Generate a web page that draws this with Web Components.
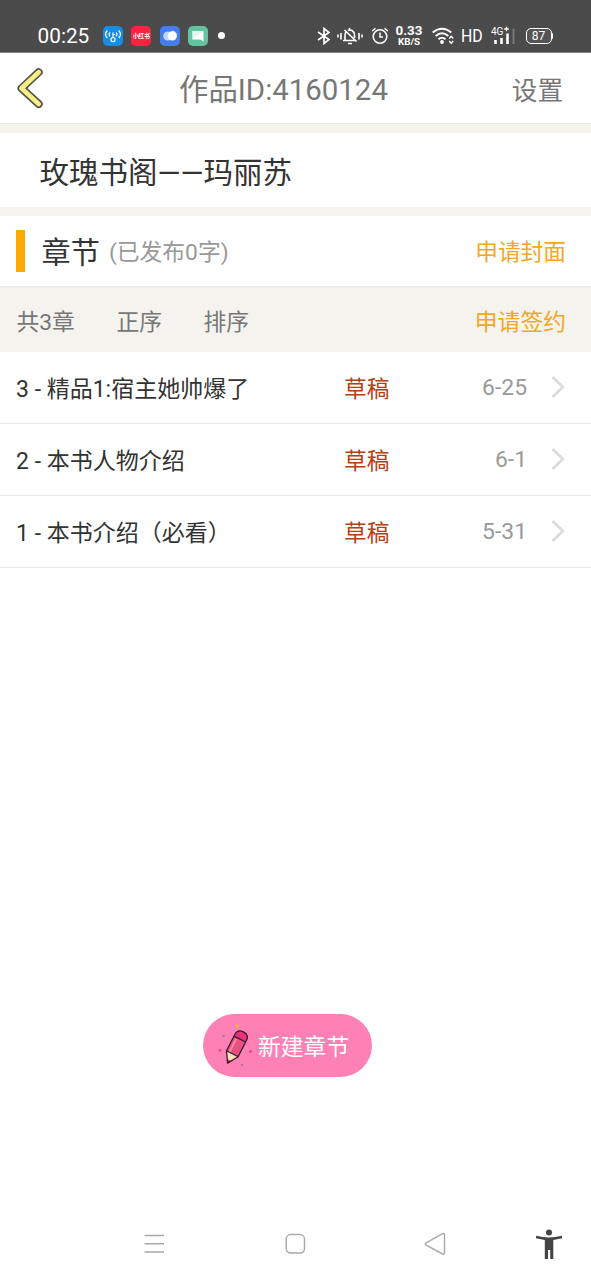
<!DOCTYPE html>
<html lang="zh-CN">
<head>
<meta charset="utf-8">
<title>作品</title>
<style>
html,body{margin:0;height:100%;background:#fff;overflow:hidden}
body{font-family:Roboto,"Noto Sans CJK SC",sans-serif;color:#333}
</style>
</head>
<body>
<work-page></work-page>
<script>
const define=(name,html)=>customElements.define(name,class extends HTMLElement{
  constructor(){super();this.attachShadow({mode:'open'}).innerHTML=html}
});

define('status-bar',`<style>
:host{display:flex;box-sizing:border-box;height:52.5px;padding:20px 38px 0 37.5px;background:#4b4b4b;border-bottom:1px solid #858585;color:#fff;align-items:center;justify-content:space-between}
.g{display:flex;align-items:center;height:32px}
.time{font-size:20.8px;line-height:32px;width:65px}
svg{display:block;flex:none}
.apps{display:flex;gap:8.6px;align-items:center}
.red{width:20px;height:20px;border-radius:5px;background:#fb233f;font-size:6px;line-height:20px;text-align:center;font-weight:700;letter-spacing:-.4px;white-space:nowrap}
.dot{width:7px;height:7px;border-radius:50%;background:#fff;margin-left:9.5px}
.rate{font-size:13.4px;font-weight:700;line-height:13px;text-align:center;width:27px;margin:-1px 9px 0 7px}
.rate small{display:block;font-size:9.8px;line-height:9px;margin-top:-1px;padding-top:1px}
.hd{font-size:18px;line-height:32px;width:22px;margin:0 8px 0 7px;transform:scaleX(.88);transform-origin:0 0}
.bat{display:flex;align-items:center;margin-left:11px}
.b{box-sizing:border-box;width:26px;height:16px;border:1.6px solid #fff;border-radius:5px;font-size:12px;line-height:14px;text-align:center;background:#555}
.n{width:1.5px;height:6px;background:#fff;border-radius:0 1px 1px 0}
</style>
<div class="g"><span class="time">00:25</span>
<div class="apps">
<svg width="20" height="20" viewBox="0 0 20 20"><rect width="20" height="20" rx="5" fill="#168ee5"/><g fill="none" stroke="#fff" stroke-width="1.2"><path d="M4.300 4.500Q.8 8.300 4.300 12M7 6.300Q5 8.300 7 10.300M15.700 4.500Q19.200 8.300 15.700 12M13 6.300Q15 8.300 13 10.300M10 11.500V6.500M10 8.500H12"/><circle cx="10" cy="13.600" r="2.100"/></g></svg>
<div class="red">小红书</div>
<svg width="20" height="20" viewBox="0 0 20 20"><rect width="20" height="20" rx="5" fill="#477ee4"/><circle cx="7.800" cy="10" r="4.600" fill="#bed7fc"/><circle cx="12.300" cy="9.900" r="4.600" fill="#fff"/><path d="M11 5.500a4.500 4.500 0 0 1 5.500 3" fill="none" stroke="#f6e8a8"/></svg>
<svg width="20" height="20" viewBox="0 0 20 20"><rect width="20" height="20" rx="5" fill="#62c4a0"/><path d="M4.500 5H15.500V15.500L12.500 13.500H4.500Z" fill="#fff"/><path d="M4.500 13L15 5.500V5H4.500Z" fill="#e0f5ec"/></svg>
</div><span class="dot"></span></div>
<div class="g">
<svg width="16" height="20" viewBox="0 0 16 20"><path d="M2 6L13 13.500L8 17.500V2.500L13 6.500L2 14" fill="none" stroke="#fff" stroke-width="1.700"/></svg>
<svg width="26" height="20" viewBox="0 0 26 20" style="margin-left:5.500px"><path d="M1 8.500V11.500M4 7V13.500M22 7V13.500M25 8.500V11.500M7.500 4L19.500 15.500M6 14.500H18M8 14V9.500Q8 7 9 6M11 4.500Q13 3.500 15 4.500Q17.500 6 17.500 9V12M12.500 2V4M11 17.500H15" fill="none" stroke="#fff" stroke-width="1.600"/></svg>
<svg width="18" height="20" viewBox="0 0 18 20" style="margin-left:7.500px"><circle cx="9" cy="10.500" r="6.800" fill="none" stroke="#fff" stroke-width="1.600"/><path d="M9 6.500V11H12M1.200 5L4.500 2.200M13.500 2.200L16.800 5" fill="none" stroke="#fff" stroke-width="1.500"/></svg>
<div class="rate">0.33<small>KB/S</small></div>
<svg width="22" height="20" viewBox="0 0 22 20"><g fill="none" stroke="#fff" stroke-width="2"><path d="M.7 6.500Q10 -1 19.300 6.500M3.700 10Q10 4.500 16.300 10M6.500 13.200Q10 10.200 13.500 13.200"/></g><circle cx="10" cy="16" r="1.900" fill="#fff"/><path d="M17.200 12.500L19.200 10.300L21.200 12.500M17.200 15L19.200 17.200L21.200 15" fill="none" stroke="#fff" stroke-width="1.400"/></svg>
<span class="hd">HD</span>
<svg width="24" height="20" viewBox="0 0 24 20"><text x="0" y="8.800" font-family="Roboto" font-size="10" fill="#fff">4G</text><path d="M13.200 3H17.800M15.500 .7V5.300" stroke="#fff" stroke-width="1.300"/><path d="M4.500 14V18M10.500 12V18M16.500 7.500V18" stroke="#fff" stroke-width="2.600"/><path d="M22.500 2.500V18" stroke="#777" stroke-width="2"/></svg>
<div class="bat"><div class="b">87</div><i class="n"></i></div>
</div>`);

define('nav-header',`<style>
:host{display:grid;grid-template-columns:150px 1fr 150px;height:71px;align-items:center;box-sizing:border-box;padding:4px 28px 0 16px;color:#777;border-bottom:1px solid #e9e9e5}
svg{display:block;margin-top:-4px}
.t{font-size:29.4px;line-height:40px;text-align:center;white-space:nowrap;justify-self:center;margin-left:-12px}
.s{font-size:25.6px;line-height:40px;text-align:right;padding-top:2px}
</style>
<svg width="28" height="42" viewBox="0 0 28 42"><path d="M22.700 5.200L5.500 21.300L22.700 37" fill="none" stroke="#50504a" stroke-width="8" stroke-linecap="round" stroke-linejoin="round"/><path d="M22.700 5.200L5.500 21.300L22.700 37" fill="none" stroke="#f8ee87" stroke-width="4.800" stroke-linecap="round" stroke-linejoin="round"/></svg>
<div class="t"><slot></slot></div><div class="s"><slot name="action"></slot></div>`);

define('book-title',`<style>
:host{display:flex;align-items:center;box-sizing:border-box;height:92px;border:solid #f4f3ee;border-width:9.500px 0;padding:6px 0 0 39.500px;font-size:29.500px;line-height:40px;white-space:nowrap}
</style><slot></slot>`);

define('section-head',`<style>
:host{display:flex;align-items:center;box-sizing:border-box;height:72.500px;border-bottom:2px solid #ececea;padding:0 25px 0 16px}
i{width:9px;height:42px;background:#ffa800;margin-right:16.500px}
span{padding-top:5px}
.h{font-size:29.200px;line-height:40px}
.n{font-size:22.800px;line-height:40px;color:#999;margin-left:9px}
.a{font-size:22.700px;line-height:40px;color:#f5a623;margin-left:auto}
</style><i></i><span class="h"><slot></slot></span><span class="n"><slot name="note"></slot></span><span class="a"><slot name="action"></slot></span>`);

define('filter-bar',`<style>
:host{display:flex;align-items:center;box-sizing:border-box;height:64px;background:#f4f3ee;padding:5px 25px 0 16.500px;font-size:22.800px;line-height:36px;color:#777;gap:41.500px}
::slotted([slot=action]){color:#f5a623}
.a{margin-left:auto}
</style><slot></slot><span class="a"><slot name="action"></slot></span>`);

define('chapter-row',`<style>
:host{display:grid;grid-template-columns:328px 1fr auto;align-items:center;box-sizing:border-box;height:72px;border-bottom:1.500px solid #e9e9e9;padding:4px 25px 0 16px;font-size:23px;line-height:36px;white-space:nowrap}
.s{color:#b8400f;font-size:22.700px}.d{color:#999;display:flex;align-items:center;margin-top:-3px;font-size:22.900px}
svg{display:block;margin:-2px 0 0 24px}
</style><span><slot></slot></span><span class="s"><slot name="state"></slot></span><span class="d"><slot name="date"></slot><svg width="15" height="24" viewBox="0 0 15 24"><path d="M1.500 2L12 12L1.500 22" fill="none" stroke="#dadada" stroke-width="2.600"/></svg></span>`);

define('create-button',`<style>
:host{display:flex;align-items:center;box-sizing:border-box;width:169px;height:62.500px;border-radius:32px;background:#fd81b4;color:#fff;font-size:22.800px;line-height:36px;padding:6px 0 0 14.500px}
svg{display:block;margin:-6px 3px 0 0}
</style>
<svg width="38" height="44" viewBox="0 0 38 44"><g transform="translate(18.500 24.500) rotate(27)"><path d="M-6.500 7V-11.500Q-6.500 -17.500 0 -17.500Q6.500 -17.500 6.500 -11.500V7L0 17.500Z" fill="#e8517e"/><path d="M-6.500 -10V-11.500Q-6.500 -17.500 0 -17.500Q6.500 -17.500 6.500 -11.500V-10Z" fill="#e93379"/><path d="M-3.300 -8V6" stroke="#f78ba4" stroke-width="2"/><path d="M-6.500 7L0 17.500L6.500 7Q3 5 0 7Q-3 5 -6.500 7Z" fill="#ffe0b8"/><path d="M-2.300 14L0 17.500L2.300 14Z" fill="#b82d5d"/><path d="M-6.500 7V-11.500Q-6.500 -17.500 0 -17.500Q6.500 -17.500 6.500 -11.500V7L0 17.500ZM-6.500 -9.500H6.500M-6.500 7H6.500" fill="none" stroke="#3b1832" stroke-width="1.300" stroke-linejoin="round"/></g><circle cx="20" cy="3" r="1.700" fill="#ffb13d"/><circle cx="6.500" cy="13" r="1.300" fill="#ae77aa"/><circle cx="3" cy="27.500" r="1.400" fill="#f14d77"/><circle cx="33.700" cy="28.500" r="1.400" fill="#e94473"/><circle cx="25" cy="42" r="1.300" fill="#ae77aa"/></svg><slot></slot>`);

define('system-nav',`<style>
:host{display:flex;align-items:center;height:72px;padding-left:143px}
svg{display:block;flex:none}
</style>
<svg width="22" height="22" viewBox="0 0 22 22"><path d="M1.500 2.500H21M1.500 10.700H21M1.500 19H21" stroke="#aaa" stroke-width="1.500"/></svg>
<svg width="22" height="22" viewBox="0 0 22 22" style="margin-left:119px"><rect x="2.200" y="1.600" width="18.300" height="18.500" rx="4.500" fill="none" stroke="#aaa" stroke-width="1.500"/></svg>
<svg width="23" height="24" viewBox="0 0 23 24" style="margin-left:118px"><path d="M18.500 1.700L2.200 10.800Q.4 12 2.200 13.200L18.500 22Q20.500 22.700 20.500 20.500V3Q20.500 1 18.500 1.700Z" fill="none" stroke="#aaa" stroke-width="1.500"/></svg>
<svg width="28" height="32" viewBox="0 0 28 32" style="margin-left:88px"><circle cx="14" cy="4.500" r="3" fill="#444"/><path d="M1.300 7.800Q14 11 26.700 7.800L27.300 10.300L18.300 12V31H15.200V22H13V31H9.800V12L.8 10.300Z" fill="#444"/></svg>`);

define('work-page',`<style>
:host{display:flex;flex-direction:column;height:1280px;width:591px}
create-button{margin:auto 0 0 202.500px}
system-nav{margin-top:131.500px}
</style>
<status-bar></status-bar>
<nav-header>作品ID:4160124<span slot="action">设置</span></nav-header>
<book-title>玫瑰书阁——玛丽苏</book-title>
<section-head>章节<span slot="note">(已发布0字)</span><span slot="action">申请封面</span></section-head>
<filter-bar><span>共3章</span><span>正序</span><span>排序</span><span slot="action">申请签约</span></filter-bar>
<chapter-row>3 - 精品1:宿主她帅爆了<span slot="state">草稿</span><span slot="date">6-25</span></chapter-row>
<chapter-row>2 - 本书人物介绍<span slot="state">草稿</span><span slot="date">6-1</span></chapter-row>
<chapter-row>1 - 本书介绍（必看）<span slot="state">草稿</span><span slot="date">5-31</span></chapter-row>
<create-button>新建章节</create-button>
<system-nav></system-nav>`);
</script>
</body>
</html>
